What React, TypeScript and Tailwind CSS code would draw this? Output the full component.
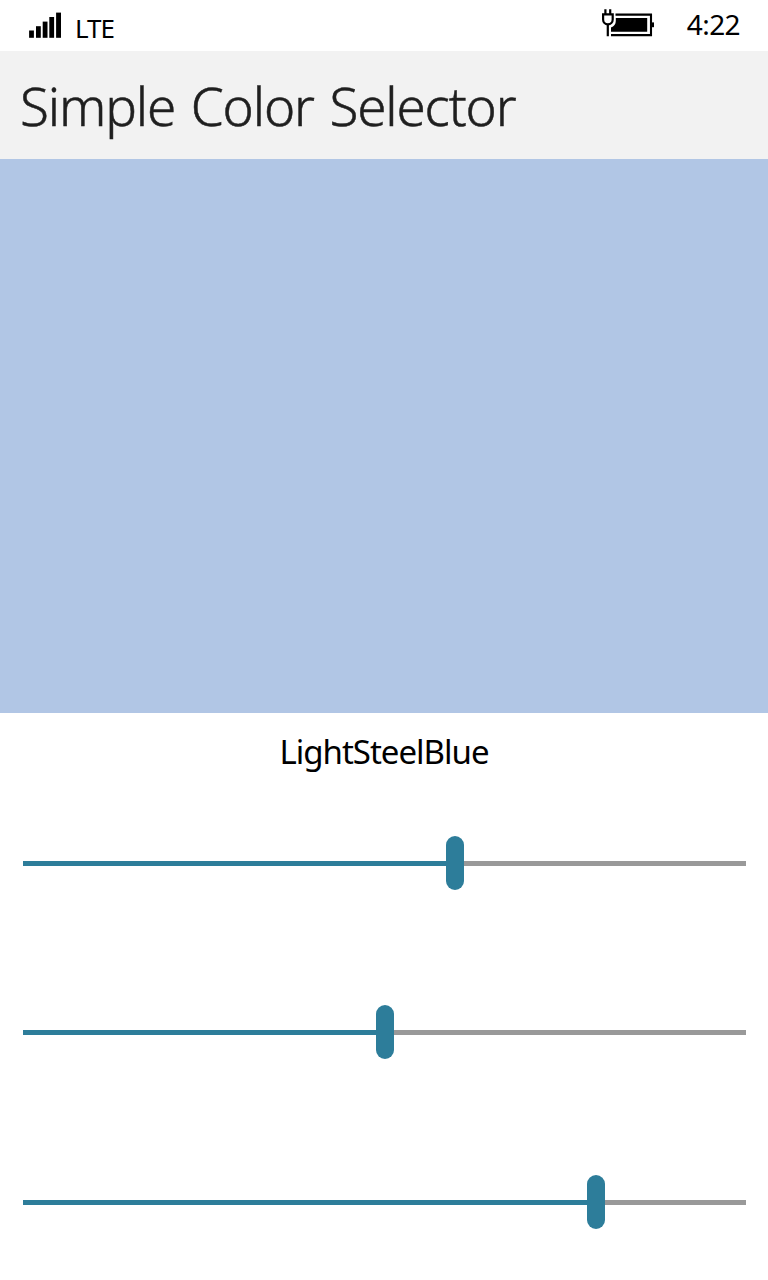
function SignalIcon() {
  return (
    <svg width="33" height="27" viewBox="29 12 33 27" fill="#000" aria-hidden="true">
      <rect x="29.1" y="30.5" width="4.8" height="7.3" />
      <rect x="36" y="26.2" width="4.8" height="11.6" />
      <rect x="42.7" y="21.6" width="4.8" height="16.2" />
      <rect x="49.3" y="17" width="4.8" height="20.8" />
      <rect x="56.1" y="12.6" width="4.9" height="25.2" />
    </svg>
  );
}

function BatteryIcon() {
  return (
    <svg width="54" height="29" viewBox="601 9 54 29" fill="none" aria-hidden="true">
      <path d="M615.5 14.6H651V35.1H611" stroke="#000" strokeWidth="2.1" />
      <rect x="652" y="22.4" width="2" height="4.8" fill="#000" />
      <path d="M615.8 18H647.2V31.8H611V27.5C614 26.5 615.8 24 615.8 21Z" fill="#000" />
      <path d="M605.4 9.3V14M610.2 9.3V14M607.8 24V36.2" stroke="#000" strokeWidth="2.2" />
      <path
        d="M603.1 14.3H612.7V19.5C612.7 22.5 610.6 24.4 607.9 24.4C605.2 24.4 603.1 22.5 603.1 19.5Z"
        stroke="#000"
        strokeWidth="2.2"
      />
    </svg>
  );
}

function Slider({ filled, label }: { filled: number; label: string }) {
  return (
    <div
      role="slider"
      aria-label={label}
      aria-valuemin={0}
      aria-valuemax={705}
      aria-valuenow={filled}
      className="flex h-[54px] items-center"
    >
      <div className="h-[5px] bg-[#2d7d9a]" style={{ width: filled }} />
      <div className="h-[54px] w-[18px] shrink-0 rounded-full bg-[#2d7d9a]" />
      <div className="h-[5px] flex-1 bg-[#999999]" />
    </div>
  );
}

export default function App() {
  return (
    <div className="flex h-[1280px] w-[768px] flex-col overflow-hidden bg-white font-['Noto_Sans',sans-serif] text-black">
      <header className="flex h-[51px] items-start pr-[28px] pl-[29px]">
        <div className="pt-[12px]">
          <SignalIcon />
        </div>
        <span className="ml-[13px] pt-[10px] text-[26px] leading-[36px] tracking-[-1px]">LTE</span>
        <div className="ml-auto pt-[9px]">
          <BatteryIcon />
        </div>
        <span className="ml-[32px] pt-[4px] text-[28px] leading-[40px] tracking-[-0.6px]">4:22</span>
      </header>
      <div className="flex h-[108px] items-center bg-[#f2f2f2] pt-[2px] pl-[20px]">
        <h1 className="text-[53px] leading-[72px] font-light tracking-[-1.15px] whitespace-nowrap text-[#1f1f1f] [-webkit-text-stroke:0.5px_#1f1f1f] [word-spacing:3px]">
          Simple Color Selector
        </h1>
      </div>
      <div className="h-[554px] bg-[#b1c6e5]" />
      <p className="mt-[15px] h-[48px] text-center text-[33px] leading-[48px] tracking-[-1px]">
        LightSteelBlue
      </p>
      <div className="mt-[60px] flex flex-col pr-[22px] pl-[23px]">
        <Slider filled={423} label="Hue" />
        <div className="h-[115px]" />
        <Slider filled={353} label="Saturation" />
        <div className="h-[116px]" />
        <Slider filled={564} label="Lightness" />
      </div>
    </div>
  );
}
